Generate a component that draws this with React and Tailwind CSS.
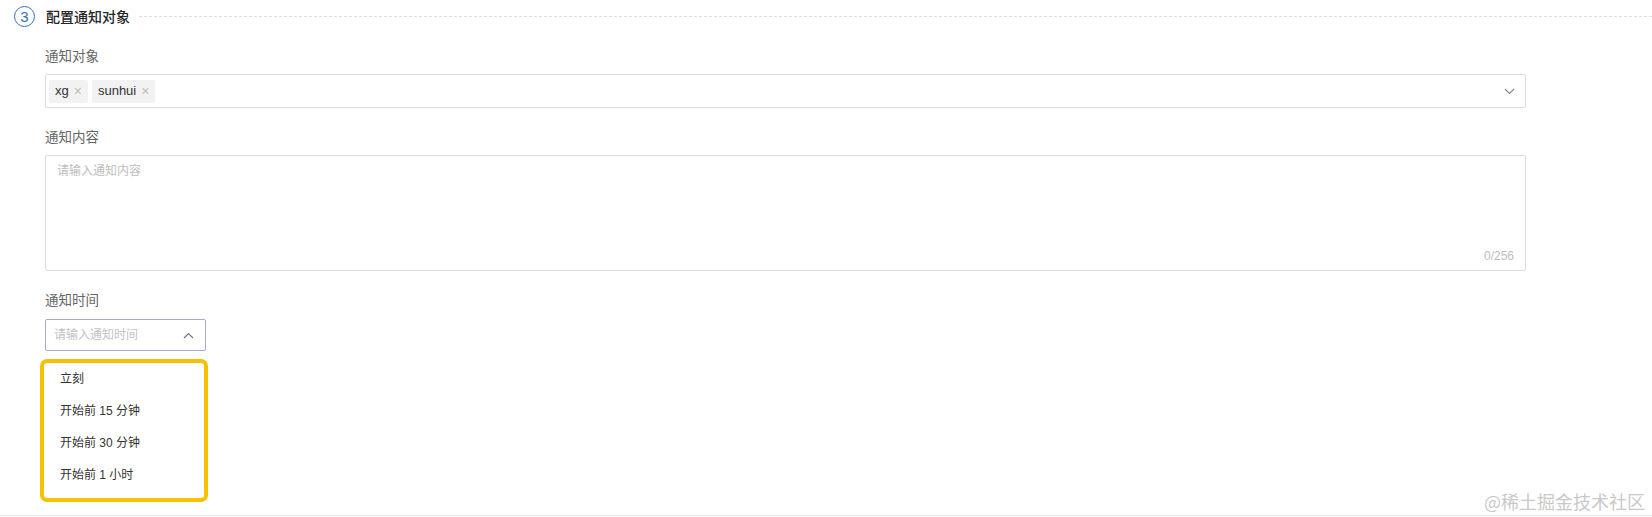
import React from "react";

const font = { fontFamily: '"Liberation Sans", "Noto Sans CJK SC", sans-serif' };

function Chevron({ up = false, className = "" }) {
  return (
    <svg width="11" height="7" viewBox="0 0 11 7" className={className} fill="none">
      {up ? (
        <path d="M1 6 L5.5 1.5 L10 6" stroke="#777" strokeWidth="1.2" />
      ) : (
        <path d="M1 1 L5.5 5.5 L10 1" stroke="#888" strokeWidth="1.2" />
      )}
    </svg>
  );
}

function Tag({ children }) {
  return (
    <span className="flex h-[23px] items-center gap-[5px] rounded-[2px] bg-[#f2f2f2] pl-[6px] pr-[6px] text-[13px] text-[#333]">
      {children}
      <span className="text-[14px] leading-none text-[#bdbdbd]">×</span>
    </span>
  );
}

export default function App() {
  return (
    <div className="relative h-[517px] w-[1652px] overflow-hidden bg-white" style={font}>
      <div className="flex h-[516px] flex-col border-b border-[#e6e6e6]">
        {/* header */}
        <div className="flex h-8 items-center">
          <div className="ml-[14px] flex h-[21px] w-[21px] items-center justify-center rounded-full border-[1.5px] border-[#3c6db3] text-[15px] leading-none text-[#3c6db3]">
            3
          </div>
          <div className="ml-[11px] text-[14px] font-medium text-[#262626]" style={{ fontFamily: '"Noto Sans CJK SC", sans-serif' }}>配置通知对象</div>
          <div className="ml-[9px] flex-1 border-t border-dashed border-[#dedede]" />
        </div>

        <div className="flex flex-col pl-[45px]">
          <div className="mt-[15px] h-5 text-[13.5px] leading-5 text-[#666]">通知对象</div>
          <div className="mt-[7px] flex h-[34px] w-[1481px] items-center rounded-[2px] border border-[#dcdcdc] pl-[3px] pr-[10px]">
            <div className="flex flex-1 items-center gap-[4px]">
              <Tag>xg</Tag>
              <Tag>sunhui</Tag>
            </div>
            <Chevron />
          </div>

          <div className="mt-[20px] h-5 text-[13.5px] leading-5 text-[#666]">通知内容</div>
          <div className="mt-[7px] flex h-[116px] w-[1481px] flex-col rounded-[2px] border border-[#dcdcdc] px-[11px] pt-[6px] pb-[5px]">
            <div className="flex-1 text-[12px] text-[#bdbdbd]">请输入通知内容</div>
            <div className="self-end text-[12px] text-[#bdbdbd]">0/256</div>
          </div>

          <div className="mt-[20px] h-5 text-[13.5px] leading-5 text-[#666]">通知时间</div>
          <div className="mt-[8px] flex h-[32px] w-[161px] items-center justify-between rounded-[2px] border border-[#a9a8c6] pl-[8px] pr-[11px]">
            <span className="text-[12px] text-[#c2c2c2]">请输入通知时间</span>
            <Chevron up />
          </div>

          <div className="mt-[8px] -ml-[5px] flex h-[143px] w-[168px] flex-col rounded-[7px] border-4 border-[#f6c200] bg-white pb-[7px] pl-4 text-[12px] text-[#333]">
            {["立刻", "开始前 15 分钟", "开始前 30 分钟", "开始前 1 小时"].map((t) => (
              <div key={t} className="flex h-8 items-center">
                {t}
              </div>
            ))}
          </div>
        </div>
      </div>

      <div className="absolute right-[7px] bottom-[4px] text-[18px] leading-6 text-[#c9c9c9]" style={{ fontFamily: '"Noto Sans CJK SC", sans-serif' }}>
        @稀土掘金技术社区
      </div>
    </div>
  );
}
